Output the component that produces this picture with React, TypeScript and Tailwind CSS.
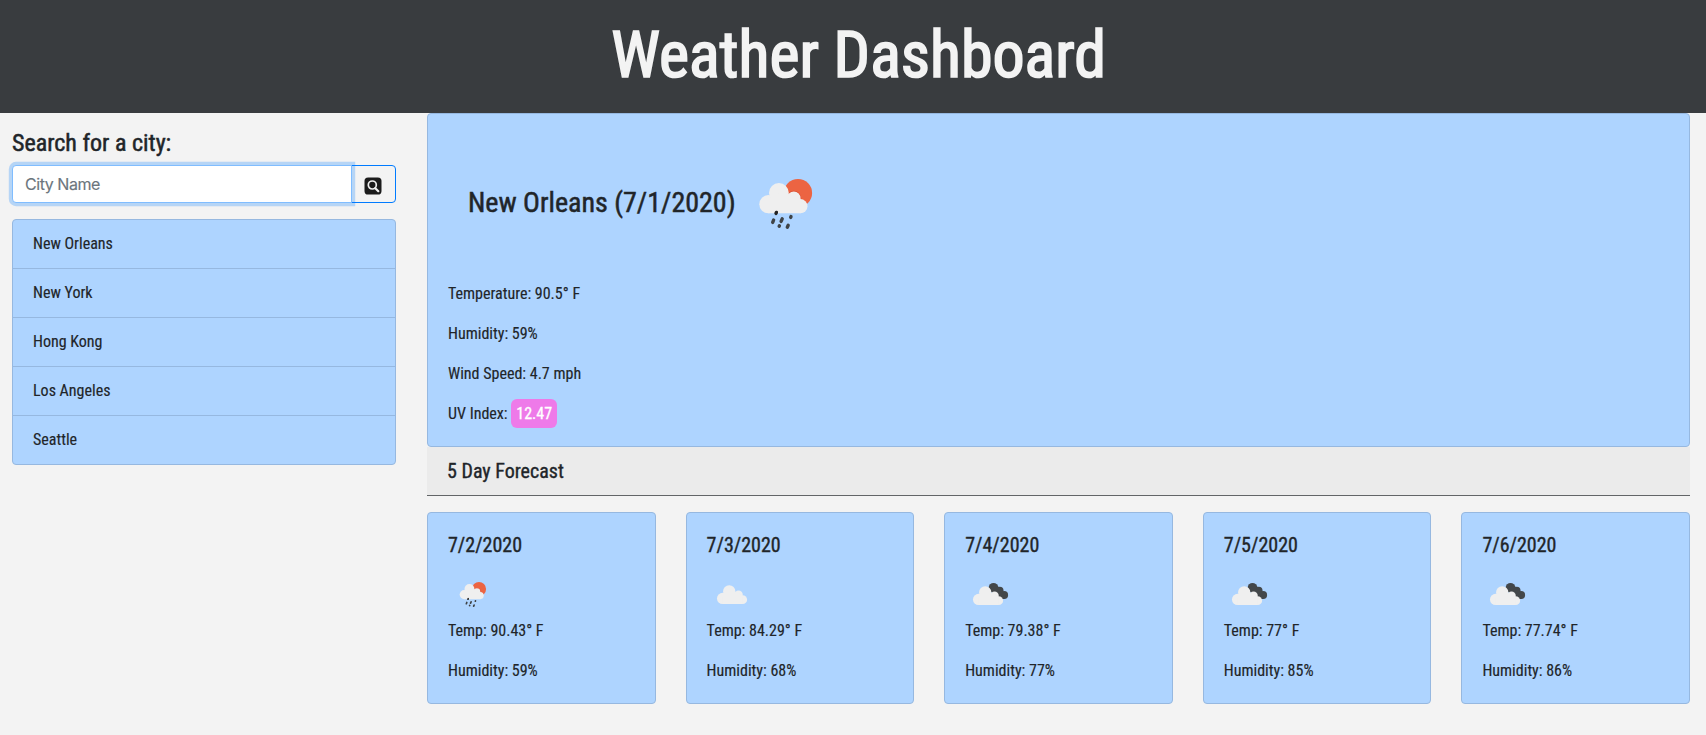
import type { ReactNode } from "react";

const cities = ["New Orleans", "New York", "Hong Kong", "Los Angeles", "Seattle"];

type IconKind = "rain" | "cloud" | "broken";

const forecast: { date: string; icon: IconKind; temp: string; humidity: number }[] = [
  { date: "7/2/2020", icon: "rain", temp: "90.43", humidity: 59 },
  { date: "7/3/2020", icon: "cloud", temp: "84.29", humidity: 68 },
  { date: "7/4/2020", icon: "broken", temp: "79.38", humidity: 77 },
  { date: "7/5/2020", icon: "broken", temp: "77", humidity: 85 },
  { date: "7/6/2020", icon: "broken", temp: "77.74", humidity: 86 },
];

function CloudShape() {
  return (
    <g>
      <circle cx="33.2" cy="51.2" r="9.1" />
      <circle cx="43.7" cy="40" r="9.9" />
      <circle cx="58.6" cy="45.2" r="6.8" />
      <circle cx="65.2" cy="53.2" r="7.1" />
      <path d="M33.2 60.3V46l10-6 9.8 1 6 1 6.2 6v12.3z" />
    </g>
  );
}

function WeatherIcon({ kind, className }: { kind: IconKind; className: string }) {
  return (
    <svg viewBox="0 0 100 100" className={className} aria-hidden="true">
      {kind === "rain" && (
        <g transform="translate(-0.8 0)">
          <circle cx="62.8" cy="40" r="14.1" fill="#ec6442" />
          <circle cx="58.6" cy="45.2" r="7.4" fill="#dd4c2e" />
          <g fill="#efefef">
            <CloudShape />
          </g>
          <g stroke="#3f4346" strokeWidth="3.4" strokeLinecap="round">
            <path d="M41.2 59.4l-.4 1" stroke="#222" />
            <path d="M38.4 67l-.9 2.4M47 65.8l-1.1 2.6M55.8 63.6l-.3.8M44.2 72.8l-.2.4M53 72.2l-.9 2" />
          </g>
        </g>
      )}
      {kind === "cloud" && (
        <g fill="#efefef" transform="translate(-10.2 -5.2) scale(1.25)">
          <CloudShape />
        </g>
      )}
      {kind === "broken" && (
        <>
          <g fill="#43474a">
            <circle cx="57" cy="37.5" r="9.6" />
            <circle cx="69.5" cy="43" r="7.6" />
            <circle cx="78.3" cy="52" r="7.9" />
            <path d="M57 30l18 10 4 20H66L50 42z" />
          </g>
          <g fill="#efefef" transform="translate(-14.2 -3.2) scale(1.25)">
            <CloudShape />
          </g>
        </>
      )}
    </svg>
  );
}

function Panel({ children, className }: { children: ReactNode; className?: string }) {
  return (
    <div className={`rounded border border-[#96b8e0] bg-[#aed4ff] p-5 ${className ?? ""}`}>{children}</div>
  );
}

export default function App() {
  return (
    <div className="min-h-screen bg-[#f3f3f3] font-['Roboto_Condensed','Roboto',sans-serif] text-base text-[#212529] [-webkit-text-stroke:0.15px_currentColor]">
      <header className="flex h-[113px] justify-center bg-[#393c3f] pt-[17px] pl-[11px]">
        <h1 className="text-[64px] leading-[77px] font-normal text-[#f3f3f3] [-webkit-text-stroke:1.7px_#f3f3f3]">
          Weather Dashboard
        </h1>
      </header>

      <div className="flex">
        <aside className="w-[427px] pt-4 pr-[31px] pl-3">
          <h4 className="mb-[7px] text-2xl leading-[29px] [-webkit-text-stroke:0.5px_#212529]">Search for a city:</h4>
          <form className="mb-4 flex">
            <input
              type="text"
              placeholder="City Name"
              className="relative z-10 h-[38px] w-[340px] rounded-l border border-[#80bdff] bg-white px-3 font-['Inter',sans-serif] text-base tracking-[-0.45px] shadow-[0_0_0_3.2px_rgba(0,123,255,0.25)] outline-none placeholder:text-[#6c757d]"
            />
            <button
              type="button"
              aria-label="Search"
              className="-ml-px flex h-[38px] w-[45px] items-center justify-center rounded-r border border-[#007bff] pt-1 pr-[2px]"
            >
              <svg viewBox="0 0 18 18" className="h-[18px] w-[18px]">
                <rect x="0.5" y="0.5" width="17" height="17" rx="3.6" fill="#1c1c1c" />
                <circle cx="8.3" cy="8" r="4" fill="none" stroke="#f1f1f1" strokeWidth="1.7" />
                <path d="M11.3 11.2l3 3" stroke="#f1f1f1" strokeWidth="2.2" strokeLinecap="round" />
              </svg>
            </button>
          </form>
          <ul className="divide-y divide-[#96b8e0] rounded border border-[#96b8e0] bg-[#aed4ff]">
            {cities.map((city) => (
              <li key={city} className="px-5 py-3 leading-6">
                {city}
              </li>
            ))}
          </ul>
        </aside>

        <main className="w-[1263px]">
          <Panel className="h-[334px]">
            <div className="mt-[19px] mb-[29px] flex h-[100px] items-center pl-5">
              <h3 className="text-[28px] leading-[34px] [-webkit-text-stroke:0.5px_#212529]">New Orleans (7/1/2020)</h3>
              <WeatherIcon kind="rain" className="h-[100px] w-[100px]" />
            </div>
            <div className="flex flex-col gap-4">
              <p>Temperature: 90.5° F</p>
              <p>Humidity: 59%</p>
              <p>Wind Speed: 4.7 mph</p>
              <p>
                UV Index: <span className="rounded-md bg-[#ee7ae9] px-[5px] py-[5px] text-white [-webkit-text-stroke:0.3px_#fff]">12.47</span>
              </p>
            </div>
          </Panel>
          <div className="mb-4 border-b border-[#626567] bg-[#ebebeb] px-5 py-3">
            <h5 className="text-xl leading-6 [-webkit-text-stroke:0.35px_#212529]">5 Day Forecast</h5>
          </div>
          <div className="grid grid-cols-5 gap-[30px]">
            {forecast.map((day) => (
              <Panel key={day.date} className="h-48">
                <h5 className="mb-3 text-xl leading-6 [-webkit-text-stroke:0.35px_#212529]">{day.date}</h5>
                <WeatherIcon kind={day.icon} className="h-[50px] w-[50px]" />
                <p className="mb-4">Temp: {day.temp}° F</p>
                <p>Humidity: {day.humidity}%</p>
              </Panel>
            ))}
          </div>
        </main>
      </div>
    </div>
  );
}
